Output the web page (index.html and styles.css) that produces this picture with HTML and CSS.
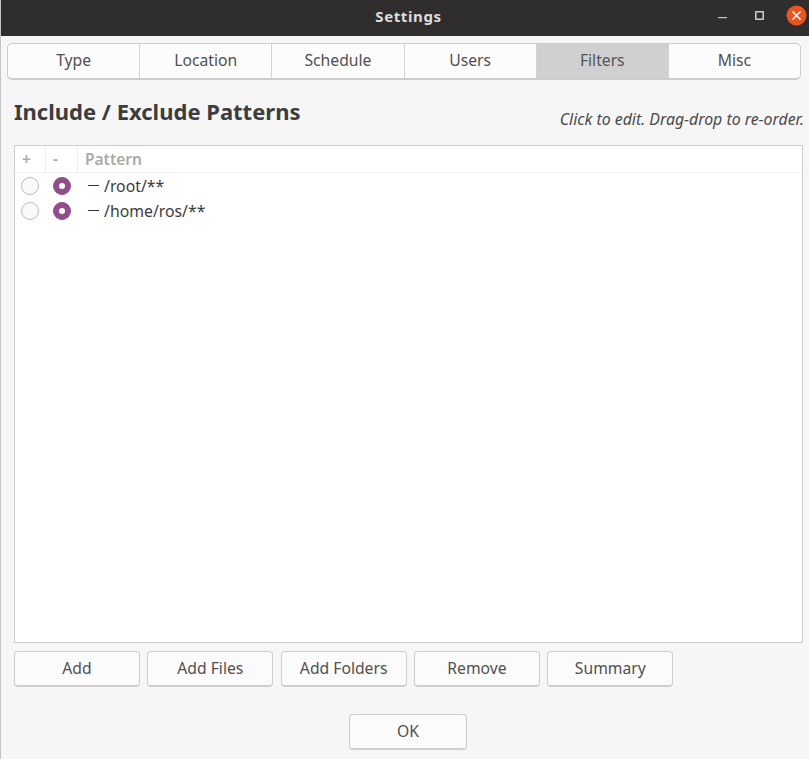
FILE: index.html
```html
<!DOCTYPE html>
<html lang="en">
<head>
<meta charset="utf-8">
<title>Settings</title>
<link rel="stylesheet" href="styles.css">
</head>
<body>
<div class="window">
  <header class="titlebar">
    <span class="title">Settings</span>
    <div class="controls">
      <svg class="ctl" width="12" height="12" viewBox="0 0 12 12"><rect x="1" y="7" width="9" height="1.200" fill="#c4c4c4"/></svg>
      <svg class="ctl" width="12" height="12" viewBox="0 0 12 12"><rect x="1.800" y="1.800" width="7.400" height="7.400" fill="none" stroke="#e8e8e8" stroke-width="1.300"/></svg>
      <svg class="close" width="21" height="21" viewBox="0 0 21 21"><circle cx="10.500" cy="10.500" r="10" fill="#e95420"/><path d="M6.800 6.800l7.400 7.400M14.200 6.800l-7.400 7.400" stroke="#fff" stroke-width="1.500" stroke-linecap="round"/></svg>
    </div>
  </header>
  <main class="content">
    <nav class="tabs">
      <button class="tab">Type</button>
      <button class="tab">Location</button>
      <button class="tab">Schedule</button>
      <button class="tab">Users</button>
      <button class="tab active">Filters</button>
      <button class="tab">Misc</button>
    </nav>
    <div class="section-head">
      <h1>Include / Exclude Patterns</h1>
      <em>Click to edit. Drag-drop to re-order.</em>
    </div>
    <div class="table">
      <div class="thead">
        <span class="col-radio">+</span>
        <span class="col-radio">-</span>
        <span class="col-pattern">Pattern</span>
      </div>
      <div class="row">
        <span class="cell-radio"><i class="radio"></i></span>
        <span class="cell-radio"><i class="radio on"></i></span>
        <span class="value"><span class="dash"></span>/root/**</span>
      </div>
      <div class="row">
        <span class="cell-radio"><i class="radio"></i></span>
        <span class="cell-radio"><i class="radio on"></i></span>
        <span class="value"><span class="dash"></span>/home/ros/**</span>
      </div>
    </div>
    <div class="actions">
      <button class="btn">Add</button>
      <button class="btn">Add Files</button>
      <button class="btn">Add Folders</button>
      <button class="btn">Remove</button>
      <button class="btn">Summary</button>
    </div>
    <div class="footer">
      <button class="btn ok">OK</button>
    </div>
  </main>
</div>
</body>
</html>
```
FILE: styles.css
```css
* { box-sizing: border-box; }
html, body { margin: 0; height: 100%; background: #f6f6f6; }
body { font-family: "Noto Sans", "Open Sans", sans-serif; color: #4a4a4a; overflow: hidden; }
.window { width: 809px; height: 759px; border-left: 1px solid #c4c4c4; display: flex; flex-direction: column; }
.titlebar { height: 36px; background: #302d2d; display: flex; align-items: center; justify-content: center; position: relative; flex: none; }
.title { color: #ddd; font-size: 15px; letter-spacing: 0.600px; font-weight: 700; margin: 0 0 5px 7px; }
.controls { position: absolute; right: 2px; top: 5px; display: flex; align-items: center; }
.ctl { display: block; }
.ctl:first-child { margin-right: 25px; }
.ctl + .ctl { margin-right: 20px; }
.close { display: block; }
.content { padding: 7px 5px 0 6px; flex: 1; display: flex; flex-direction: column; }
.tabs { display: flex; height: 37px; width: 794px; border: 1px solid #cdcdcd; border-bottom-width: 2px; border-radius: 5px; background: #fcfcfc; overflow: hidden; flex: none; }
.tab { flex: 1 1 0; font: 15.700px "Noto Sans", sans-serif; color: #505050; background: transparent; border: 0; border-right: 1px solid #d4d4d4; padding: 0 0 2px; }
.tab:last-child { border-right: 0; }
.tab.active { background: #d0d0d0; color: #555; }
.section-head { display: flex; justify-content: space-between; align-items: flex-end; margin: 14px 0 0 7px; height: 33px; }
h1 { margin: 0; font-size: 22px; line-height: 32px; font-weight: 700; color: #3d3d3d; }
.section-head em { font-size: 15.850px; line-height: 20px; color: #4a4a4a; margin-bottom: -2px; white-space: nowrap; }
.table { margin: 18px 0 0 7px; width: 789px; height: 498px; border: 1px solid #cdcdcd; background: #fff; flex: none; }
.thead { display: flex; height: 27px; border-bottom: 1px solid #f1f1f1; background: #fff; font-size: 15.500px; font-weight: 600; color: #aaa; align-items: center; }
.col-radio { width: 31px; height: 100%; padding-left: 7px; border-right: 1px solid #f0f0f0; line-height: 26px; }
.col-radio + .col-radio { width: 32px; }
.col-pattern { padding-left: 7px; line-height: 26px; }
.row { display: flex; height: 25px; align-items: center; }
.cell-radio { width: 32px; padding-left: 6px; display: flex; flex: none; }
.cell-radio + .cell-radio { width: 31px; }
.radio { width: 18px; height: 18px; border-radius: 50%; border: 1px solid #bdbdbd; background: #fafafa; display: flex; align-items: center; justify-content: center; }
.radio.on { background: #924d8b; border-color: #924d8b; }
.radio.on::after { content: ""; width: 6px; height: 6px; border-radius: 50%; background: #fff; }
.value { font-size: 15.800px; color: #3c3c3c; display: flex; align-items: center; margin-left: 10px; }
.dash { width: 11px; height: 1.500px; background: #333; margin-right: 5px; }
.actions { display: flex; gap: 7.330px; margin: 8px 0 0 7px; }
.btn { width: 126px; height: 36px; font: 15.700px "Noto Sans", sans-serif; color: #505050; background: #fbfbfb; border: 1px solid #cfcfcf; border-bottom-width: 2px; border-radius: 4px; padding: 0 0 1px; }
.footer { display: flex; justify-content: center; margin-top: 27px; padding-left: 5px; }
.btn.ok { width: 118px; }
```
